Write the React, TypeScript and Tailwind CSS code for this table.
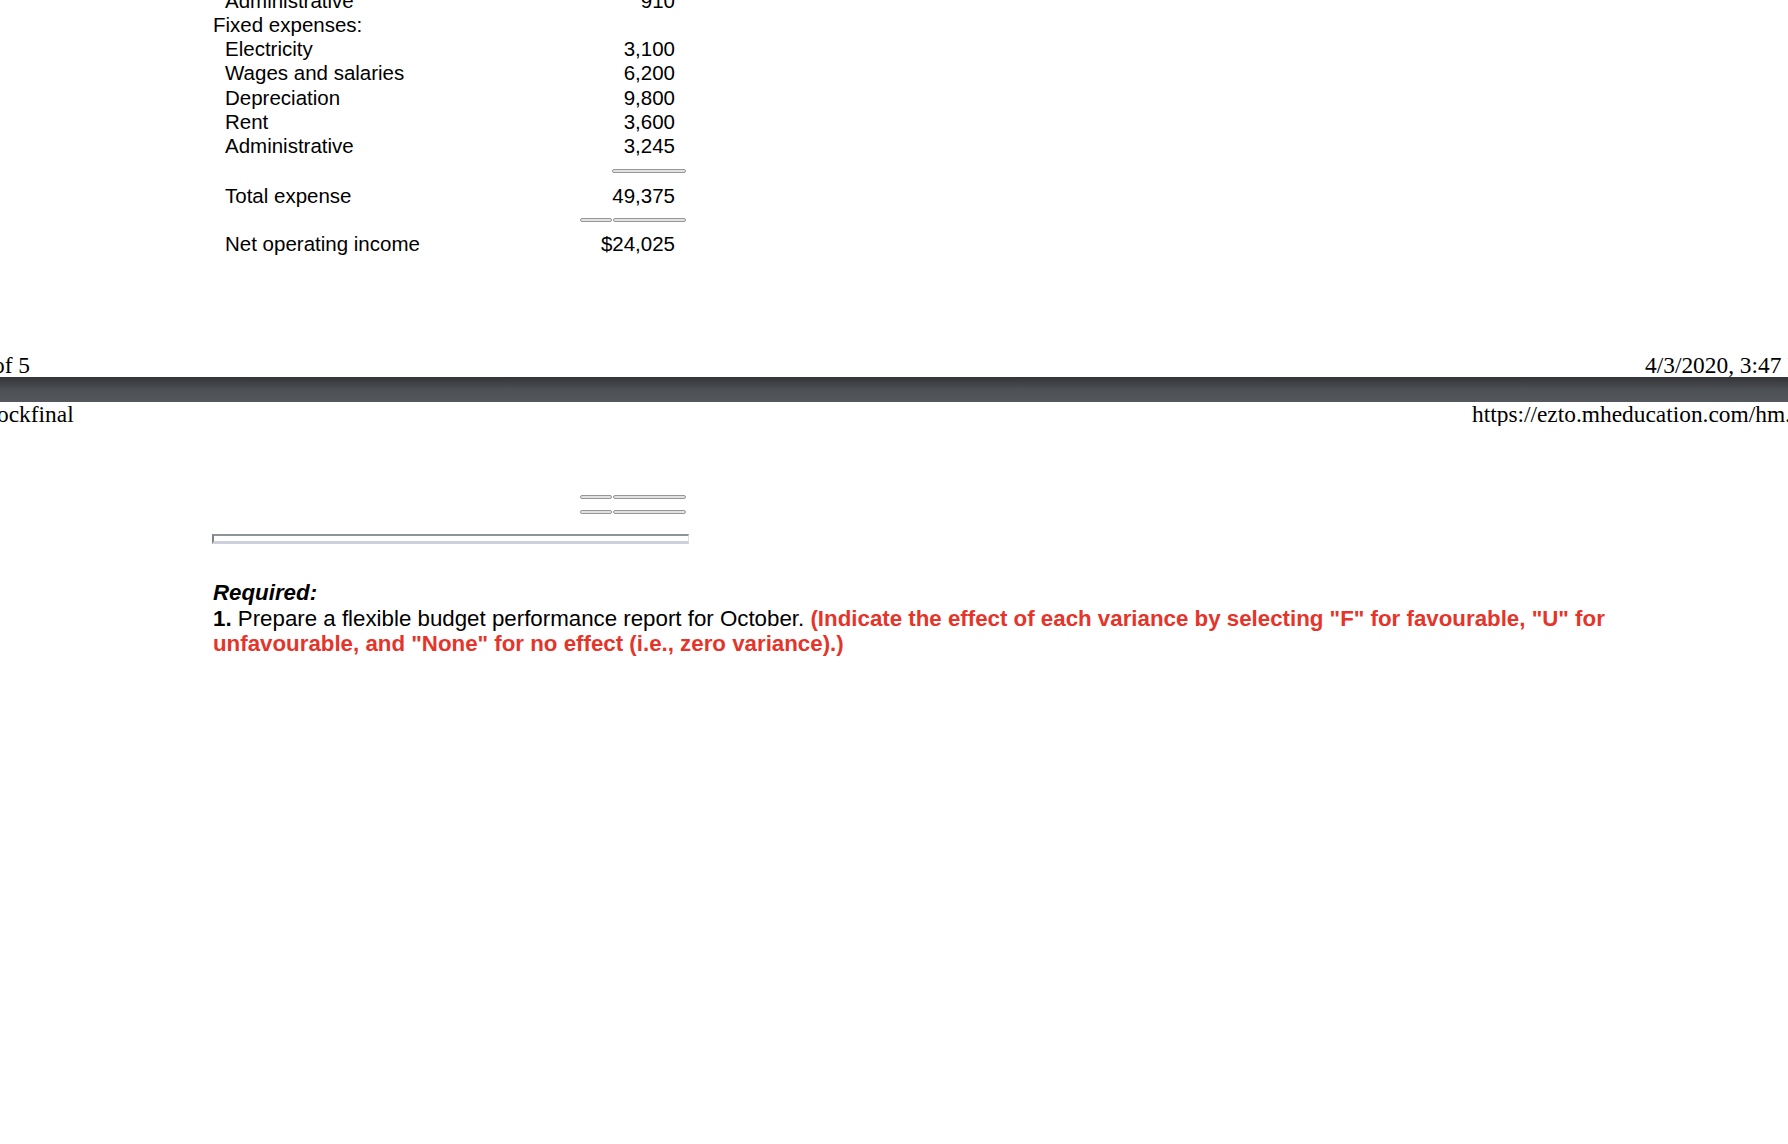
import React from "react";

type Row = { label: string; value?: string; indent?: boolean };

const rows: Row[] = [
  { label: "Administrative", value: "910", indent: true },
  { label: "Fixed expenses:" },
  { label: "Electricity", value: "3,100", indent: true },
  { label: "Wages and salaries", value: "6,200", indent: true },
  { label: "Depreciation", value: "9,800", indent: true },
  { label: "Rent", value: "3,600", indent: true },
  { label: "Administrative", value: "3,245", indent: true },
];

function Pill({ className = "" }: { className?: string }) {
  return <div className={`h-[4px] rounded-full border border-[#979797] bg-[#e2e2e2] ${className}`} />;
}

function DoubleRule() {
  return (
    <div className="flex w-[106px] gap-px">
      <Pill className="w-[32px]" />
      <Pill className="flex-1" />
    </div>
  );
}

function TableRow({ label, value, indent }: Row) {
  return (
    <div className="grid h-[24.3px] grid-cols-[367px_32px_74px] leading-[24.3px]">
      <div className={indent ? "pl-[12px]" : ""}>{label}</div>
      <div className="col-span-2 pr-[11px] text-right">{value}</div>
    </div>
  );
}

export default function App() {
  return (
    <div className="min-h-[1144px] overflow-hidden bg-white font-['Liberation_Sans',Arial,sans-serif] text-black">
      {/* income statement tail */}
      <div className="mt-[-11.5px] pl-[213px] text-[20.5px]">
        {rows.map((r, i) => (
          <TableRow key={i} {...r} />
        ))}
        <div className="grid h-[25.5px] grid-cols-[367px_32px_74px] items-center">
          <div />
          <div />
          <Pill className="w-[74px]" />
        </div>
        <TableRow label="Total expense" value="49,375" indent />
        <div className="flex h-[23.7px] items-center pl-[367px]">
          <DoubleRule />
        </div>
        <TableRow label="Net operating income" value="$24,025" indent />
      </div>

      {/* printed page break */}
      <div className="mt-[96.8px] font-['Liberation_Serif','Times_New_Roman',serif] text-[23.4px] leading-[24px]">
        <div className="grid grid-cols-[1645px_1fr] overflow-hidden whitespace-nowrap">
          <div className="ml-[-7px]">of 5</div>
          <div>4/3/2020, 3:47 PM</div>
        </div>
        <div className="h-[25px] bg-gradient-to-b from-[#333437] via-[#4d5054] to-[#54575b]" />
        <div className="grid grid-cols-[1472px_1fr] overflow-hidden whitespace-nowrap">
          <div className="ml-[-3px]">ockfinal</div>
          <div>https://ezto.mheducation.com/hm.</div>
        </div>
      </div>

      <div className="pl-[213px]">
        <div className="ml-[367px] mt-[69px] flex flex-col gap-[11px]">
          <DoubleRule />
          <DoubleRule />
        </div>
        <div className="mt-[20px] ml-[-1px] h-[10px] w-[477px] border-t-2 border-l-2 border-b-[3px] border-r border-t-[#8e9498] border-l-[#7c8286] border-b-[#cdd1de] border-r-[#dde0e8] bg-white" />

        <div className="mt-[36px] w-[1430px] text-[22.3px] leading-[25.5px]">
          <p className="font-bold italic">Required:</p>
          <p>
            <span className="font-bold">1.</span> Prepare a flexible budget performance report for October.{" "}
            <span className="font-bold text-[#e5342a]">
              (Indicate the effect of each variance by selecting "F" for favourable, "U" for unfavourable, and "None" for
              no effect (i.e., zero variance).)
            </span>
          </p>
        </div>
      </div>
    </div>
  );
}
